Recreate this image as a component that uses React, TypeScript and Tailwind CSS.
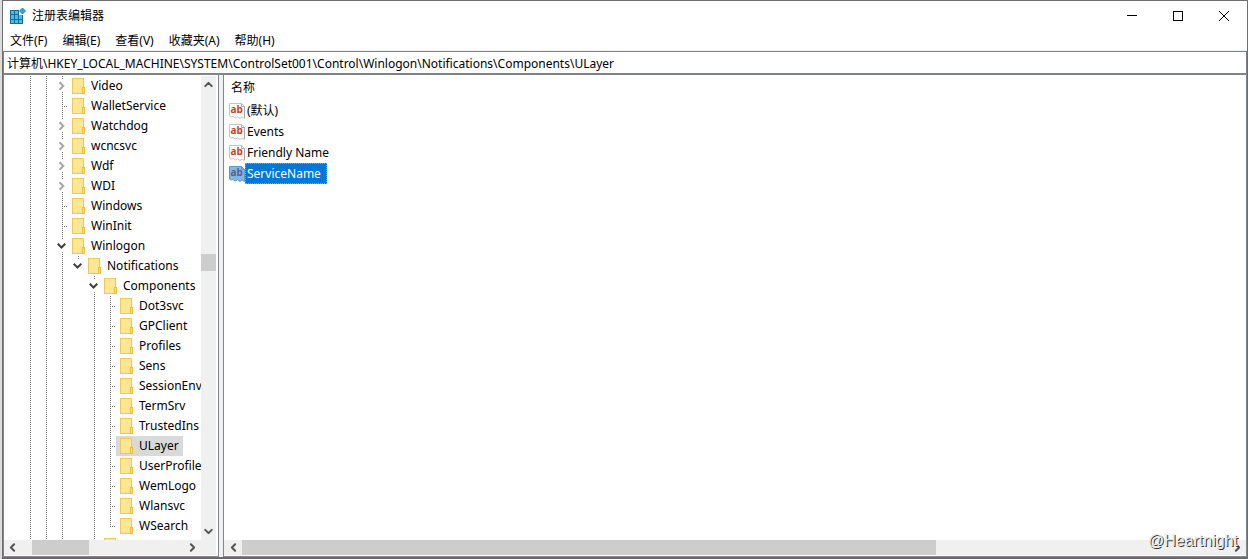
import { ChevronDown } from "lucide-react";

type Cell = "line" | "blank" | "leaf" | "last" | "closed" | "open" | "openLast";
type Node = { name: string; cells: Cell[]; selected?: boolean };

const base: Cell[] = ["line", "line"];
const l0 = (name: string, c: Cell): Node => ({ name, cells: [...base, c] });
const l3 = (name: string, c: Cell = "leaf", selected = false): Node => ({
  name,
  selected,
  cells: [...base, "line", "blank", "line", c],
});

const nodes: Node[] = [
  l0("Video", "closed"),
  l0("WalletService", "leaf"),
  l0("Watchdog", "closed"),
  l0("wcncsvc", "closed"),
  l0("Wdf", "closed"),
  l0("WDI", "closed"),
  l0("Windows", "leaf"),
  l0("WinInit", "leaf"),
  l0("Winlogon", "open"),
  { name: "Notifications", cells: [...base, "line", "openLast"] },
  { name: "Components", cells: [...base, "line", "blank", "open"] },
  l3("Dot3svc"),
  l3("GPClient"),
  l3("Profiles"),
  l3("Sens"),
  l3("SessionEnv"),
  l3("TermSrv"),
  l3("TrustedIns"),
  l3("ULayer", "leaf", true),
  l3("UserProfile"),
  l3("WemLogo"),
  l3("Wlansvc"),
  l3("WSearch", "last"),
  { name: "", cells: [...base, "line", "blank", "last"] },
];

const values = ["(默认)", "Events", "Friendly Name", "ServiceName"];
const menus = ["文件(F)", "编辑(E)", "查看(V)", "收藏夹(A)", "帮助(H)"];

const V = "w-px bg-[repeating-linear-gradient(to_bottom,#7b7b7b_0_1px,transparent_1px_2px)]";
const H = "h-px bg-[repeating-linear-gradient(to_right,#7b7b7b_0_1px,transparent_1px_2px)]";

function TreeCell({ kind, own }: { kind: Cell; own: boolean }) {
  const width = own ? "w-[14px]" : "w-4";
  if (kind === "blank") return <span className={`${width} h-5 shrink-0`} />;
  if (kind === "line")
    return (
      <span className={`${width} h-5 shrink-0 flex pl-2`}>
        <span className={`${V} h-5`} />
      </span>
    );
  if (kind === "leaf" || kind === "last")
    return (
      <span className={`${width} h-5 shrink-0 flex pl-2`}>
        <span className={`${V} ${kind === "leaf" ? "h-5" : "h-[11px]"}`} />
        <span className={`${H} mt-[10px] ml-px flex-1`} />
      </span>
    );
  return (
    <span className={`${width} h-5 shrink-0 flex flex-col`}>
      <span className={`${V} h-1 ml-2`} />
      <svg viewBox="0 0 14 12" className="w-[14px] h-3" fill="none" strokeWidth="2">
        {kind === "closed" ? (
          <path d="M5.5 2.2L9.3 6L5.5 9.8" stroke="#a6a6a6" />
        ) : (
          <path d="M3.7 3.7L7.5 7.5L11.3 3.7" stroke="#404040" />
        )}
      </svg>
      {kind !== "openLast" && <span className={`${V} h-1 ml-2`} />}
    </span>
  );
}

function Folder() {
  return (
    <svg viewBox="0 0 14 16" className="w-[14px] h-4 shrink-0">
      <rect x="0.5" y="0.5" width="11" height="15" fill="#ffe694" stroke="#edc956" />
      <rect x="10.5" y="9.5" width="2" height="6" fill="#ffe694" stroke="#e5bd45" />
    </svg>
  );
}

function TreeRow({ node }: { node: Node }) {
  return (
    <li className="flex h-5 pl-[18px]">
      {node.cells.map((c, i) => (
        <TreeCell key={i} kind={c} own={i === node.cells.length - 1} />
      ))}
      <button
        className={`flex h-5 shrink-0 items-center gap-[5px] whitespace-nowrap pl-1 pr-1 ${
          node.selected ? "bg-[#d9d9d9]" : ""
        }`}
      >
        <Folder />
        {node.name}
      </button>
    </li>
  );
}

function Arrow({ dir }: { dir: "up" | "down" | "left" | "right" }) {
  const rot = { up: "rotate-180", down: "", left: "rotate-90", right: "-rotate-90" }[dir];
  return (
    <button aria-label={dir} className="flex size-[17px] shrink-0 items-center justify-center text-[#555]">
      <ChevronDown className={`size-[13px] ${rot}`} strokeWidth={3.8} />
    </button>
  );
}

function ValueIcon({ selected }: { selected: boolean }) {
  const edge = selected ? "#5a9bd4" : "#a9a9a9";
  return (
    <svg viewBox="0 0 16 16" className="size-4 shrink-0">
      <path
        d="M0.5 0.5H12.5L15.5 3.5V15.5L13 14L11 15.5L8.5 13.8L6 15L4 13.5L2 14L0.5 13Z"
        fill={selected ? "#7db8ea" : "#fff"}
        stroke={selected ? "#5a9bd4" : "#c4c4c4"}
      />
      <path d="M12.5 0.5V3.5H15.5V15" fill="none" stroke={edge} />
      <text
        x="1.4"
        y="10"
        className="font-['Open_Sans'] text-[10px] font-bold"
        fill={selected ? "#6a5a86" : "#d13f1c"}
      >
        ab
      </text>
    </svg>
  );
}

export default function App() {
  return (
    <div className="relative flex h-screen flex-col overflow-hidden bg-[#dcdcdc] pl-[2px] font-['Noto_Sans','Noto_Sans_CJK_SC',sans-serif] text-[12px] leading-5 text-black">
      <div className="flex min-h-0 flex-1 flex-col border border-[#6e6e6e] bg-white">
        <header className="flex h-[29px] shrink-0 items-center pl-[7px]">
          <svg viewBox="0 0 16 16" className="size-4">
            <path d="M0 2H9V7H13V16H0Z" fill="#1b6b95" />
            <path
              d="M1 3H4V6H1ZM5 3H8V6H5ZM1 7H4V11H1ZM5 7H8V11H5ZM9 7H12V11H9ZM1 12H4V15H1ZM5 12H8V15H5ZM9 12H12V15H9Z"
              fill="#3cc0f5"
            />
            <path d="M12.5 0L15.5 3L12.5 6L9.5 3Z" fill="#3aa0d8" stroke="#1b6f9c" strokeWidth="0.8" />
          </svg>
          <h1 className="ml-[6px]">注册表编辑器</h1>
          <div className="ml-auto flex">
            <button aria-label="最小化" className="flex h-[29px] w-[46px] items-center justify-center">
              <svg viewBox="0 0 10 10" className="size-[10px]" stroke="#000">
                <path d="M0 4.5H10" />
              </svg>
            </button>
            <button aria-label="最大化" className="flex h-[29px] w-[46px] items-center justify-center">
              <svg viewBox="0 0 10 10" className="size-[10px]" fill="none" stroke="#000">
                <rect x="0.5" y="0.5" width="9" height="9" />
              </svg>
            </button>
            <button aria-label="关闭" className="flex h-[29px] w-[46px] items-center justify-center">
              <svg viewBox="0 0 10 10" className="size-[10px]" stroke="#000">
                <path d="M0 0L10 10M10 0L0 10" />
              </svg>
            </button>
          </div>
        </header>

        <nav className="flex h-[21px] shrink-0 items-center gap-[15px] border-b border-[#f0f0f0] pl-[7px] pt-[2px]">
          {menus.map((m) => (
            <button key={m}>{m}</button>
          ))}
        </nav>

        <input
          aria-label="地址"
          defaultValue="计算机\HKEY_LOCAL_MACHINE\SYSTEM\ControlSet001\Control\Winlogon\Notifications\Components\ULayer"
          className="h-6 w-full shrink-0 border border-b-2 border-[#7f8287] bg-white px-[3px] outline-none"
        />

        <main className="flex min-h-0 flex-1 bg-[#f0f0f0]">
          <section className="flex w-[216px] shrink-0 flex-col border-x border-b border-[#828790] bg-white pr-[2px] pb-px pt-px">
            <div className="flex min-h-0 flex-1">
              <ul className="min-w-0 flex-1 overflow-hidden">
                {nodes.map((n) => (
                  <TreeRow key={n.name} node={n} />
                ))}
              </ul>
              <div className="flex w-[15px] shrink-0 flex-col items-center bg-[#f0f0f0]">
                <Arrow dir="up" />
                <div className="mt-[161px] h-[17px] w-full bg-[#cdcdcd]" />
                <div className="flex-1" />
                <Arrow dir="down" />
              </div>
            </div>
            <div className="flex h-[15px] items-center bg-[#f0f0f0]">
              <Arrow dir="left" />
              <div className="ml-[11px] h-[15px] w-[57px] bg-[#cdcdcd]" />
              <div className="flex-1" />
              <Arrow dir="right" />
              <div className="w-[15px]" />
            </div>
          </section>

          <section className="ml-1 flex min-w-0 flex-1 flex-col border-x border-b border-[#828790] bg-white pb-px pt-px">
            <div className="min-h-0 flex-1 overflow-hidden">
              <h2 className="flex h-6 items-center pl-[7px]">名称</h2>
              <ul>
                {values.map((v) => {
                  const selected = v === "ServiceName";
                  return (
                    <li key={v} className="flex h-[21px] items-center pl-[5px]">
                      <button className="flex items-center">
                        <ValueIcon selected={selected} />
                        <span
                          className={`flex h-[21px] items-center border pl-px pr-[5px] ${
                            selected ? "border-dotted border-[#ff8728] bg-[#0078d7] text-white" : "border-transparent"
                          }`}
                        >
                          {v}
                        </span>
                      </button>
                    </li>
                  );
                })}
              </ul>
            </div>
            <div className="flex h-[15px] items-center bg-[#f0f0f0] pl-px">
              <Arrow dir="left" />
              <div className="h-[15px] w-[68%] bg-[#cdcdcd]" />
              <div className="flex-1" />
              <Arrow dir="right" />
            </div>
          </section>
        </main>
      </div>
      <div className="h-px shrink-0 bg-[#6a6468]" />
      <p className="absolute bottom-2 right-[10px] font-['Liberation_Sans',sans-serif] text-[16px] text-[#e8e8e8] [text-shadow:1px_1px_0_#333333]">
        @Heartnight
      </p>
    </div>
  );
}
